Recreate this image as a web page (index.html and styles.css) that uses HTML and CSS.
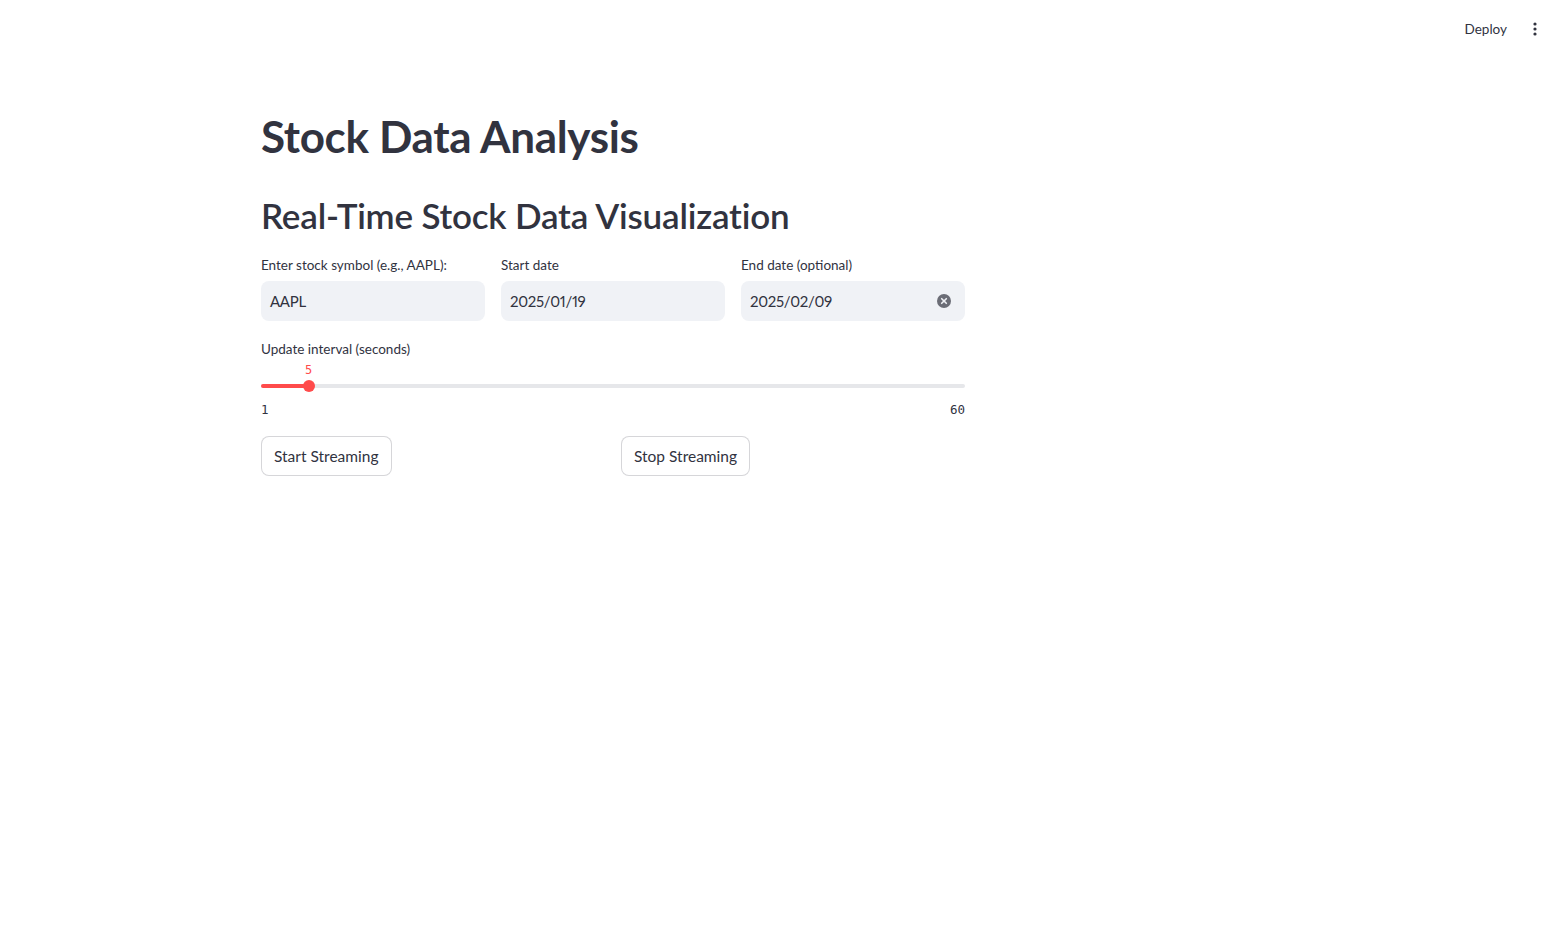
FILE: index.html
```html
<!DOCTYPE html>
<html>
<head>
<meta charset="utf-8">
<link rel="stylesheet" href="styles.css">
</head>
<body>
<header class="topbar">
  <button class="deploy">Deploy</button>
  <button class="menu" aria-label="menu">
    <svg width="16" height="16" viewBox="0 0 16 16"><circle cx="8" cy="3" r="1.6" fill="#31333f"/><circle cx="8" cy="8" r="1.6" fill="#31333f"/><circle cx="8" cy="13" r="1.6" fill="#31333f"/></svg>
  </button>
</header>
<main class="main">
  <div class="block">
    <h1 class="title">Stock Data Analysis</h1>
    <h2 class="subtitle">Real-Time Stock Data Visualization</h2>
    <div class="cols3">
      <div class="field">
        <label class="label">Enter stock symbol (e.g., AAPL):</label>
        <div class="input"><span>AAPL</span></div>
      </div>
      <div class="field">
        <label class="label">Start date</label>
        <div class="input"><span>2025/01/19</span></div>
      </div>
      <div class="field">
        <label class="label">End date (optional)</label>
        <div class="input"><span>2025/02/09</span>
          <svg class="clear" width="14" height="14" viewBox="0 0 14 14"><circle cx="7" cy="7" r="7" fill="#6b6d76"/><path d="M4.7 4.7 L9.3 9.3 M9.3 4.7 L4.7 9.3" stroke="#f0f2f6" stroke-width="1.6" stroke-linecap="round"/></svg>
        </div>
      </div>
    </div>
    <div class="slider">
      <label class="label">Update interval (seconds)</label>
      <div class="slider-area">
        <div class="track"><div class="fill" style="width:6.78%"></div></div>
        <div class="thumb" style="left:6.78%"><span class="thumb-val">5</span></div>
      </div>
      <div class="ticks"><span>1</span><span>60</span></div>
    </div>
    <div class="cols2">
      <div><button class="btn">Start Streaming</button></div>
      <div><button class="btn">Stop Streaming</button></div>
    </div>
  </div>
</main>
</body>
</html>
```
FILE: styles.css
```css
* { box-sizing: border-box; }
html, body { margin: 0; padding: 0; }
body {
  background: #ffffff;
  color: #31333f;
  font-family: Lato, "Noto Sans", sans-serif;
  width: 1559px;
  height: 950px;
  overflow: hidden;
}
.topbar {
  height: 60px;
  display: flex;
  align-items: center;
  justify-content: flex-end;
  padding-right: 14px;
  gap: 6px;
}
.deploy {
  border: none;
  background: transparent;
  font-family: inherit;
  font-size: 13.5px;
  color: #31333f;
  padding: 4px 12px;
  margin-top: -2px;
}
.menu {
  border: none;
  background: transparent;
  padding: 0;
  width: 20px;
  height: 20px;
  display: flex;
  align-items: center;
  justify-content: center;
  margin-top: -2px;
}
.main {
  padding-left: 245px;
}
.block {
  width: 736px;
  padding: 30px 16px 0 16px;
}
.title {
  margin: 0;
  font-size: 44px;
  font-weight: 700;
  line-height: 1.2;
  padding: 20px 0 16px;
  letter-spacing: -0.35px;
}
.subtitle {
  margin: 0;
  font-size: 35px;
  font-weight: 600;
  line-height: 1.2;
  padding: 15px 0 19px;
  letter-spacing: -0.2px;
}
.cols3 {
  display: grid;
  grid-template-columns: repeat(3, 1fr);
  gap: 16px;
}
.field { display: flex; flex-direction: column; }
.label {
  font-size: 13.5px;
  line-height: 20px;
  height: 26px;
  color: #31333f;
}
.input {
  height: 40px;
  background: #f0f2f6;
  border-radius: 8px;
  display: flex;
  align-items: center;
  justify-content: space-between;
  padding: 0 14px 0 9px;
  font-size: 15px;
  letter-spacing: -0.3px;
  font-variant-numeric: proportional-nums;
}
.slider { margin-top: 17px; }
.slider-area {
  position: relative;
  height: 40px;
}
.track {
  position: absolute;
  left: 0; right: 0;
  top: 25px;
  height: 4px;
  border-radius: 2px;
  background: #e6e7ea;
}
.fill {
  height: 100%;
  background: #ff4b4b;
  border-radius: 2px;
}
.thumb {
  position: absolute;
  top: 21px;
  width: 12px;
  height: 12px;
  margin-left: -6px;
  border-radius: 50%;
  background: #ff4b4b;
}
.thumb-val {
  position: absolute;
  left: 50%;
  transform: translateX(-50%);
  top: -18px;
  font-family: "DejaVu Sans Mono", monospace;
  font-size: 12px;
  color: #ff4b4b;
  line-height: 16px;
}
.ticks {
  display: flex;
  justify-content: space-between;
  font-family: "DejaVu Sans Mono", monospace;
  font-size: 12.5px;
  line-height: 16px;
  color: #31333f;
  margin-top: 3px;
}
.cols2 {
  display: grid;
  grid-template-columns: 1fr 1fr;
  gap: 16px;
  margin-top: 18px;
}
.btn {
  height: 40px;
  padding: 4px 12px;
  background: #ffffff;
  border: 1px solid rgba(49, 51, 63, 0.2);
  border-radius: 8px;
  font-family: inherit;
  font-size: 15.5px;
  color: #31333f;
}
```
